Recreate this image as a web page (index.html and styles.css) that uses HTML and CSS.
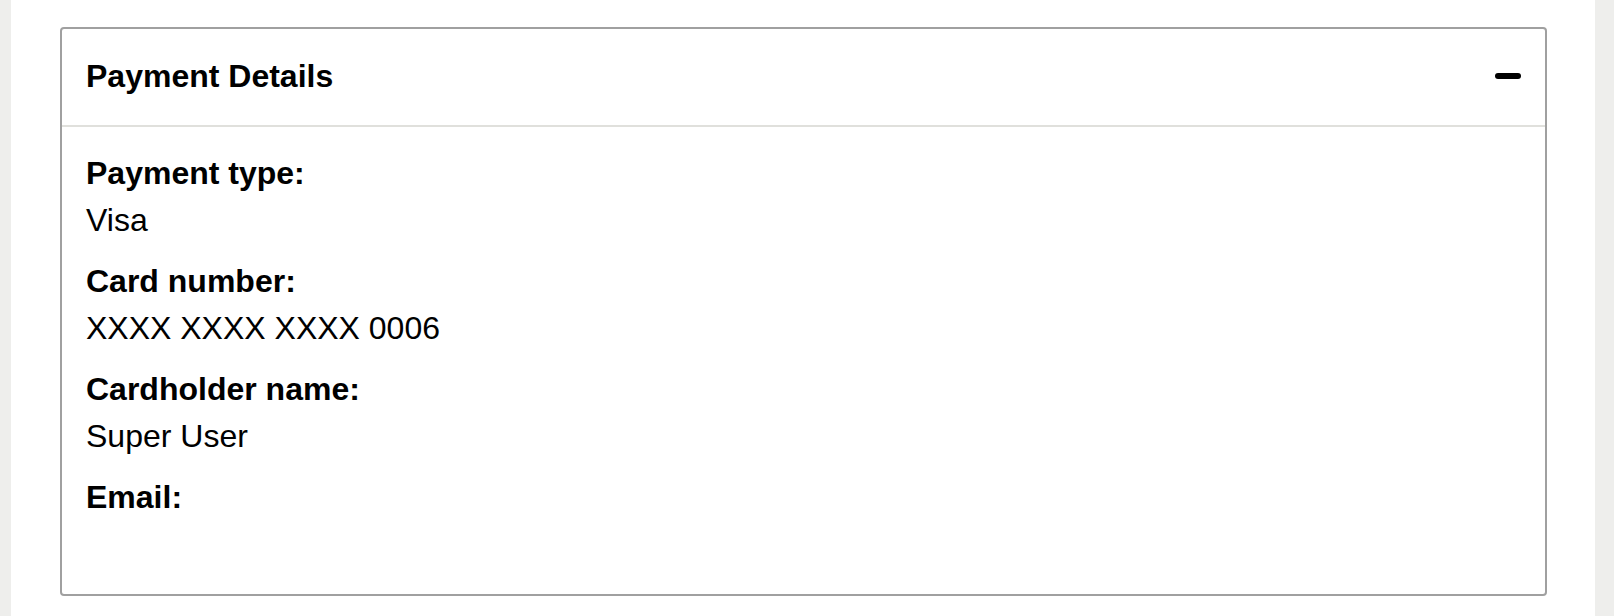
FILE: index.html
```html
<!DOCTYPE html>
<html lang="en">
<head>
<meta charset="UTF-8">
<meta name="viewport" content="width=device-width, initial-scale=1.0">
<title>Payment Details</title>
<link rel="stylesheet" href="styles.css">
</head>
<body>
<div class="page">
  <div class="panel">
    <div class="panel-head">
      <h2>Payment Details</h2>
      <span class="toggle" aria-label="Collapse"></span>
    </div>
    <dl class="panel-body">
      <dt>Payment type:</dt>
      <dd>Visa</dd>
      <dt>Card number:</dt>
      <dd>XXXX XXXX XXXX 0006</dd>
      <dt>Cardholder name:</dt>
      <dd>Super User</dd>
      <dt>Email:</dt>
      <dd></dd>
    </dl>
  </div>
</div>
</body>
</html>
```

FILE: styles.css
```css
body {
    margin: 0;
    padding: 0;
    background-color: #eeeeec;
    font-family: "Liberation Sans", Arial, sans-serif;
    color: #000;
}
.page {
    margin: 0 19px 0 11px;
    min-height: 616px;
    background-color: #fff;
    padding: 27px 48px 0 49px;
    box-sizing: border-box;
}
.panel {
    border: 2px solid #a0a0a0;
    border-radius: 4px;
}
.panel-head {
    display: flex;
    justify-content: space-between;
    align-items: center;
    height: 94px;
    padding: 0 24px 2px 24px;
    border-bottom: 2px solid #e0e0dc;
}
.panel-head h2 {
    margin: 0;
    font-size: 32px;
    font-weight: bold;
}
.toggle {
    width: 26px;
    height: 6px;
    border-radius: 3px;
    background-color: #000;
}
.panel-body {
    margin: 0;
    padding: 23px 24px 26px 24px;
    font-size: 32px;
    line-height: 47px;
}
.panel-body dt {
    font-weight: bold;
    margin-top: 14px;
}
.panel-body dt:first-child {
    margin-top: 0;
}
.panel-body dd {
    margin: 0;
    min-height: 47px;
}
```
